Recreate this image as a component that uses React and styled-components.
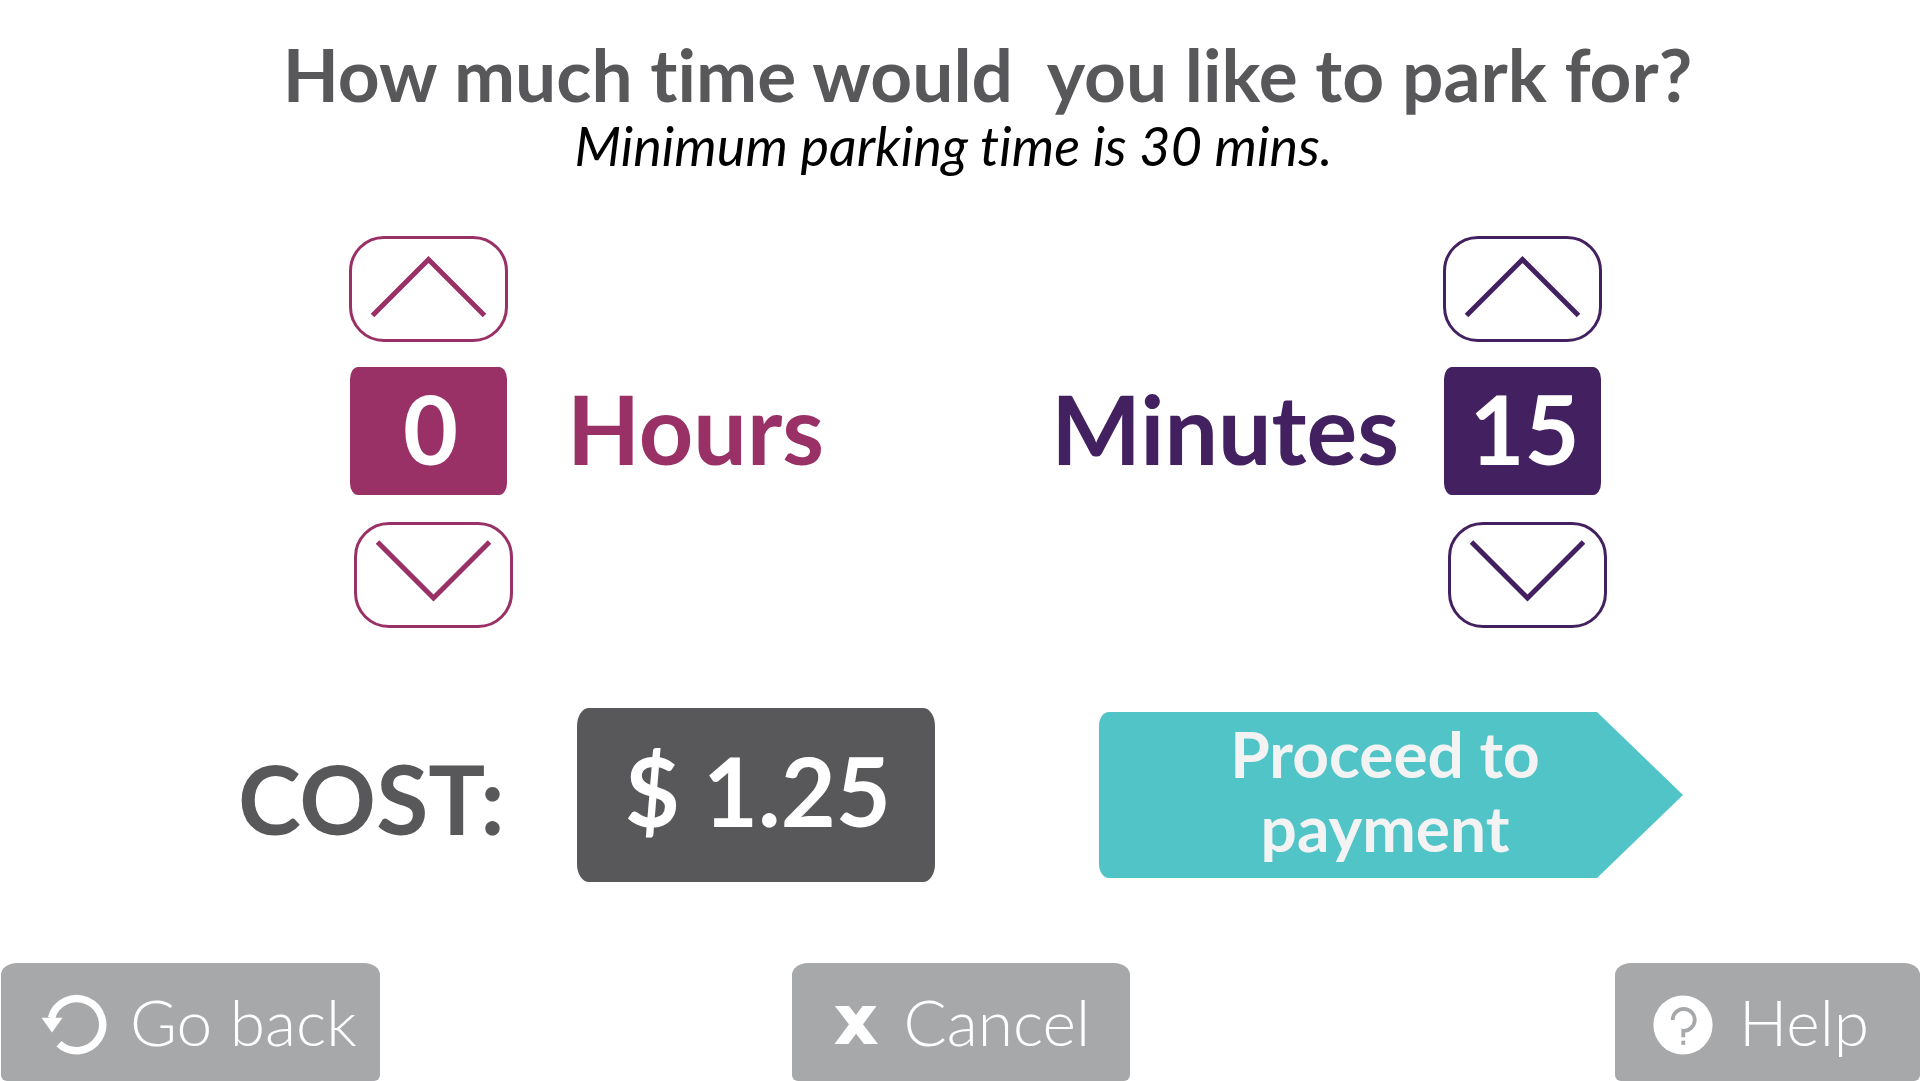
import React, { useState } from "react";
import styled, { createGlobalStyle } from "styled-components";

const GlobalStyle = createGlobalStyle`
  *, *::before, *::after { box-sizing: border-box; }
  body {
    margin: 0;
    background: #ffffff;
    font-family: Lato, "Open Sans", sans-serif;
    font-variant-ligatures: none;
    color: #58585a;
  }
  button { font: inherit; font-variant-ligatures: none; cursor: pointer; }
`;

const Screen = styled.div`
  display: flex;
  flex-direction: column;
  min-height: 100vh;
  overflow: hidden;
`;

const Header = styled.header`
  padding-top: 32px;
  text-align: center;
`;

const Title = styled.h1`
  margin: 0;
  padding-left: 54px;
  font-size: 73px;
  line-height: 84px;
  font-weight: 700;
  white-space: pre-wrap;
`;

const Subtitle = styled.p`
  margin: 0;
  padding-right: 14px;
  font-size: 54px;
  line-height: 60px;
  font-style: italic;
  font-weight: 400;
  color: #000000;
`;

const Pickers = styled.main`
  display: flex;
  justify-content: space-between;
  padding: 60px 314px 0 349px;
`;

const Picker = styled.section`
  display: flex;
  flex-direction: ${(p) => (p.$reverse ? "row-reverse" : "row")};
  align-items: center;
  gap: ${(p) => (p.$reverse ? "44px" : "54px")};
  color: ${(p) => p.$color};
`;

const Stepper = styled.div`
  display: flex;
  flex-direction: column;
  width: 164px;
`;

const StepButton = styled.button`
  align-self: ${(p) => (p.$down ? "flex-end" : "flex-start")};
  width: 159px;
  height: 106px;
  padding: 0;
  border: 3px solid currentColor;
  border-radius: 35px;
  background: none;
  color: inherit;

  svg {
    display: block;
    width: 153px;
    height: 100px;
  }
`;

const Value = styled.output`
  display: flex;
  align-items: center;
  justify-content: center;
  width: 157px;
  height: 128px;
  margin: 25px 0 27px 1px;
  padding: 0 0 6px 4px;
  border-radius: 8px / 12px;
  background: ${(p) => p.$color};
  color: #ffffff;
  font-size: 95px;
  line-height: 110px;
  font-weight: 700;
`;

const Unit = styled.label`
  padding-bottom: 8px;
  font-size: 95px;
  line-height: 110px;
  font-weight: 700;
`;

const Summary = styled.section`
  display: flex;
  align-items: center;
  justify-content: space-between;
  padding: 80px 238px 0 238px;
`;

const Cost = styled.div`
  display: flex;
  align-items: center;
  gap: 72px;
`;

const CostLabel = styled.label`
  padding-top: 6px;
  font-size: 95px;
  line-height: 110px;
  font-weight: 700;
`;

const Amount = styled.output`
  display: flex;
  justify-content: center;
  width: 358px;
  height: 174px;
  padding: 27px 0 0 4px;
  border-radius: 12px / 18px;
  background: #58585a;
  color: #ffffff;
  font-size: 95px;
  line-height: 110px;
  font-weight: 700;
`;

const Proceed = styled.button`
  width: 584px;
  height: 166px;
  padding: 0 120px 8px 108px;
  border: 0;
  border-radius: 10px / 14px;
  background: #51c4c8;
  clip-path: polygon(0 0, 498px 0, 100% 50%, 498px 100%, 0 100%);
  color: #f3f3f4;

  && {
    font-size: 64px;
    line-height: 74px;
    font-weight: 700;
  }
`;

const Footer = styled.footer`
  display: grid;
  grid-template-columns: 1fr auto 1fr;
  margin-top: auto;
  padding: 0 1px;
`;

const FooterButton = styled.button`
  display: flex;
  align-items: center;
  justify-self: ${(p) => p.$side};
  gap: ${(p) => p.$gap};
  width: ${(p) => p.$width};
  height: 118px;
  padding: 0 0 0 ${(p) => p.$inset};
  border: 0;
  border-radius: 16px 16px 6px 6px / 12px 12px 6px 6px;
  background: #a7a8aa;
  color: #ffffff;

  && {
    font-size: 64px;
    line-height: 72px;
    font-weight: 300;
  }

  svg {
    flex: none;
    margin-top: 5px;
  }
`;

const UpIcon = () => (
  <svg viewBox="0 0 153 100" fill="none" stroke="currentColor" strokeWidth="5" aria-hidden="true">
    <path d="M20.5 76.5 76.5 20.5 132.5 76.5" />
  </svg>
);

const DownIcon = () => (
  <svg viewBox="0 0 153 100" fill="none" stroke="currentColor" strokeWidth="5" aria-hidden="true">
    <path d="M20.5 17 76.5 73 132.5 17" />
  </svg>
);

const BackIcon = () => (
  <svg width="68" height="62" viewBox="0 0 68 62" aria-hidden="true">
    <path
      d="M11.5 24A26 26 0 1 1 19 49.7"
      fill="none"
      stroke="currentColor"
      strokeWidth="7.5"
    />
    <path d="M1.5 23.7H22.5L12 38.5Z" fill="currentColor" />
  </svg>
);

const CrossIcon = () => (
  <svg width="44" height="38" viewBox="0 0 44 38" aria-hidden="true">
    <path
      d="M3.4 -6 41.6 44M40 -6 3 44"
      fill="none"
      stroke="currentColor"
      strokeWidth="11.2"
    />
  </svg>
);

const HelpIcon = () => (
  <svg width="60" height="60" viewBox="0 0 60 60" aria-hidden="true">
    <circle cx="30" cy="30" r="29.6" fill="currentColor" />
    <g fill="none" stroke="#a7a8aa" strokeWidth="3.8">
      <path d="M19.7 25A11 11 0 1 1 30.3 35.8V42.3" />
      <path d="M30.3 45.7V49.8" />
    </g>
  </svg>
);

function TimePicker({ id, name, color, value, onStep, reverse }) {
  return (
    <Picker $color={color} $reverse={reverse}>
      <Stepper>
        <StepButton type="button" aria-label={`More ${name}`} onClick={() => onStep(1)}>
          <UpIcon />
        </StepButton>
        <Value id={id} $color={color}>{value}</Value>
        <StepButton $down type="button" aria-label={`Less ${name}`} onClick={() => onStep(-1)}>
          <DownIcon />
        </StepButton>
      </Stepper>
      <Unit htmlFor={id}>{name}</Unit>
    </Picker>
  );
}

export default function App() {
  const [hours, setHours] = useState(0);
  const [minutes, setMinutes] = useState(15);
  const cost = (hours * 4 + minutes / 15) * 1.25;

  return (
    <Screen>
      <GlobalStyle />
      <Header>
        <Title>{"How much time would  you like to park for?"}</Title>
        <Subtitle>Minimum parking time is 30 mins.</Subtitle>
      </Header>
      <Pickers>
        <TimePicker
          id="hours"
          name="Hours"
          color="#993166"
          value={hours}
          onStep={(d) => setHours((h) => Math.min(23, Math.max(0, h + d)))}
        />
        <TimePicker
          id="minutes"
          name="Minutes"
          color="#432160"
          value={minutes}
          onStep={(d) => setMinutes((m) => (m + d * 15 + 60) % 60)}
          reverse
        />
      </Pickers>
      <Summary>
        <Cost>
          <CostLabel htmlFor="cost">COST:</CostLabel>
          <Amount id="cost">{`$ ${cost.toFixed(2)}`}</Amount>
        </Cost>
        <Proceed type="button">Proceed to payment</Proceed>
      </Summary>
      <Footer>
        <FooterButton type="button" $side="start" $width="379px" $inset="39px" $gap="22px">
          <BackIcon />
          Go back
        </FooterButton>
        <FooterButton type="button" $side="center" $width="338px" $inset="42px" $gap="26px">
          <CrossIcon />
          Cancel
        </FooterButton>
        <FooterButton type="button" $side="end" $width="305px" $inset="38px" $gap="26px">
          <HelpIcon />
          Help
        </FooterButton>
      </Footer>
    </Screen>
  );
}
